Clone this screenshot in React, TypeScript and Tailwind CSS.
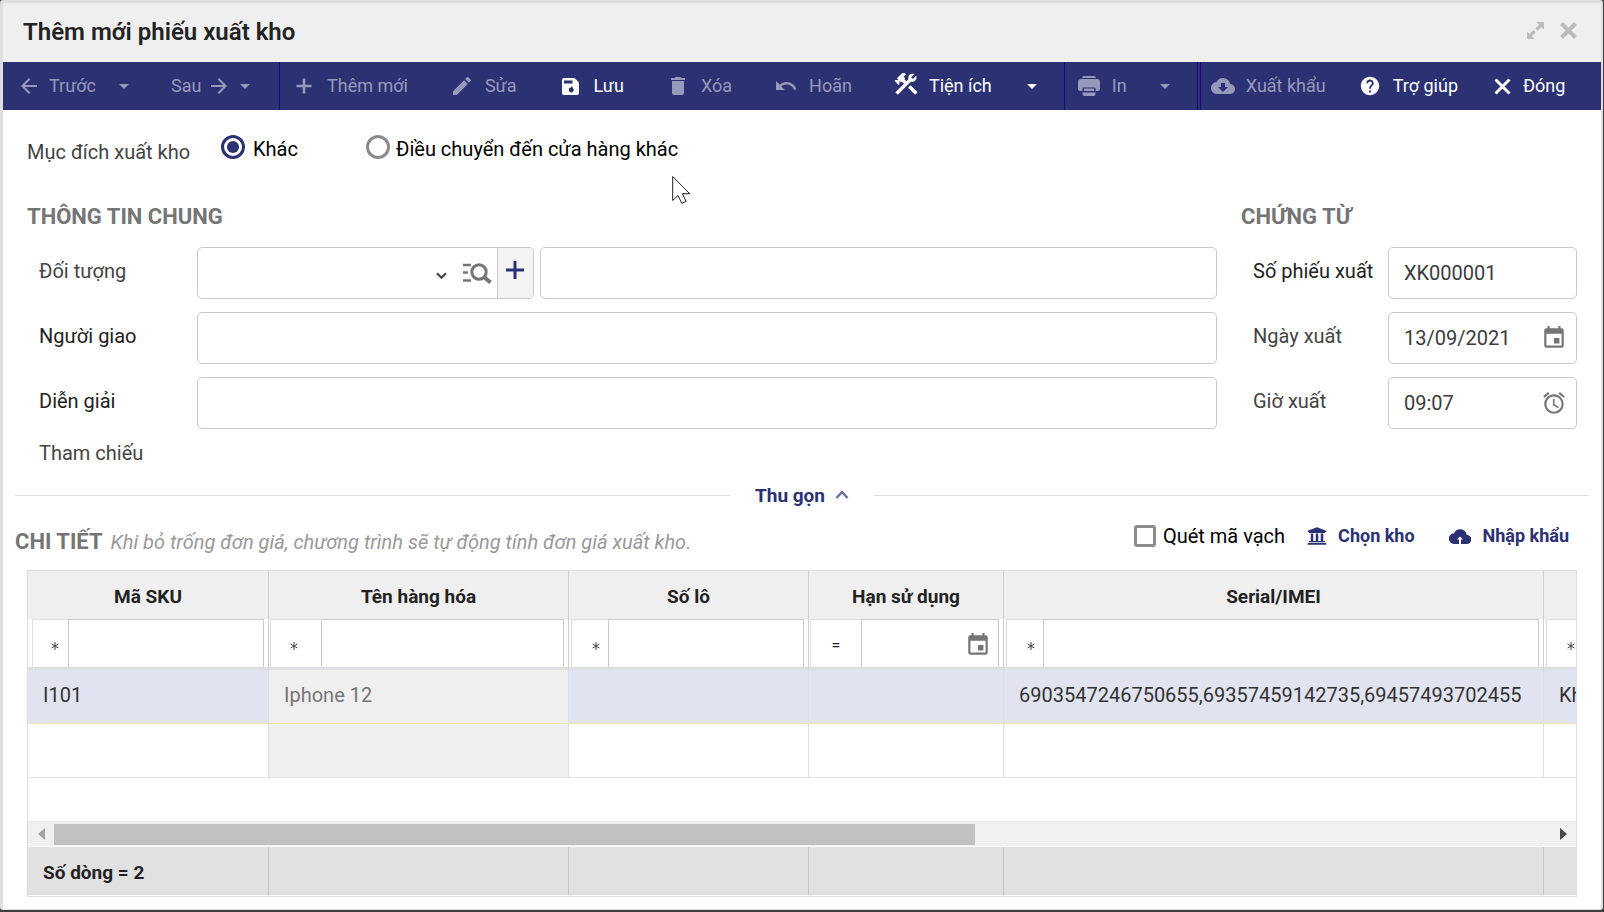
import type { ReactNode } from "react";
import {
  MdAlarm,
  MdArrowBack,
  MdArrowDropDown,
  MdArrowForward,
  MdCloudDownload,
  MdDelete,
  MdEdit,
  MdEvent,
  MdHelp,
  MdUndo,
} from "react-icons/md";
import { FaUniversity } from "react-icons/fa";

const FIELD =
  "h-[52px] w-full min-w-0 rounded-[5px] border border-[#c9c9c9] bg-white px-[15px] text-[#3c3c3c] outline-none";

const COLUMNS = [
  { title: "Mã SKU", op: "*", opClass: "w-[36px] ml-1 pl-2" },
  { title: "Tên hàng hóa", op: "*", opClass: "w-[51px] ml-px pr-1" },
  { title: "Số lô", op: "*", opClass: "w-[37px] ml-[2px] pl-3" },
  { title: "Hạn sử dụng", op: "=", opClass: "w-[51px] ml-px", date: true },
  { title: "Serial/IMEI", op: "*", opClass: "w-[37px] ml-[2px] pl-3" },
  { title: "Kho", op: "*", opClass: "w-[37px] ml-[2px] pl-3" },
];

const ROWS = [
  ["I101", "Iphone 12", "", "", "6903547246750655,69357459142735,69457493702455", "Kho tổng"],
  ["", "", "", "", "", ""],
];

export default function App() {
  return (
    <div className="flex min-h-screen flex-col bg-[#3f3f3f] pr-px pb-[2px] font-['Roboto','Liberation_Sans',sans-serif] text-[20px] leading-6 text-[#222]">
      <main className="relative flex flex-1 flex-col overflow-hidden rounded-[3px] border-t-[3px] border-r-2 border-b border-l-[3px] border-[#dedede] bg-white">
        <header className="flex h-[59px] items-center justify-between bg-[#efefef] pr-6 pl-5">
          <h1 className="pb-[2px] text-[24px] font-semibold">Thêm mới phiếu xuất kho</h1>
          <div className="flex items-center gap-4 pb-1 text-[#bcbcbc]">
            <button aria-label="Phóng to">
              <ExpandIcon />
            </button>
            <button aria-label="Đóng cửa sổ">
              <CrossIcon strokeWidth={4} />
            </button>
          </div>
        </header>

        <Toolbar />

        <div className="flex flex-1 flex-col px-3">
          {/* Purpose */}
          <div role="radiogroup" aria-labelledby="purpose" className="ml-3 flex h-[74px] items-center">
            <span id="purpose" className="w-[194px] pt-[10px] text-[#444]">
              Mục đích xuất kho
            </span>
            <Radio label="Khác" defaultChecked className="w-[145px] gap-2" />
            <Radio label="Điều chuyển đến cửa hàng khác" className="gap-[6px]" />
          </div>

          {/* Form */}
          <div className="ml-3 flex">
            <section className="min-w-0 flex-1">
              <h2 className="mt-[17px] text-[22px] leading-8 font-bold text-[#757575]">THÔNG TIN CHUNG</h2>
              <div className="mt-[14px] flex flex-col gap-[13px]">
                <FormRow label="Đối tượng" id="partner" labelClass="text-[#444]">
                  <div className="flex h-[52px] w-[337px] shrink-0 overflow-hidden rounded-[5px] border border-[#c9c9c9]">
                    <input id="partner" className="min-w-0 flex-1 px-[15px] outline-none" />
                    <button aria-label="Mở danh sách" className="flex w-8 items-center justify-center pt-[6px]">
                      <svg width="11" height="8" viewBox="0 0 11 8" fill="none" stroke="#444" strokeWidth="2.2">
                        <path d="M1 1.2l4.5 4.6L10 1.2" />
                      </svg>
                    </button>
                    <button aria-label="Tìm kiếm" className="flex w-10 items-center justify-center">
                      <ListSearchIcon />
                    </button>
                    <button
                      aria-label="Thêm đối tượng"
                      className="flex w-9 items-center justify-center border-l border-[#c9c9c9] bg-[#f3f3f3] pr-px pb-[6px]"
                    >
                      <svg width="18" height="18" viewBox="0 0 18 18" stroke="#2b3173" strokeWidth="3">
                        <path d="M9 0v18M0 9h18" />
                      </svg>
                    </button>
                  </div>
                  <input aria-label="Tên đối tượng" className={FIELD} />
                </FormRow>
                <FormRow label="Người giao" id="deliverer">
                  <input id="deliverer" className={FIELD} />
                </FormRow>
                <FormRow label="Diễn giải" id="note">
                  <input id="note" className={FIELD} />
                </FormRow>
              </div>
              <p className="mt-3 ml-3 text-[#444]">Tham chiếu</p>
            </section>

            <section className="ml-6 w-[348px] pr-3">
              <h2 className="mt-[17px] text-[22px] leading-8 font-bold text-[#757575]">CHỨNG TỪ</h2>
              <div className="mt-[14px] flex flex-col gap-[13px]">
                <VoucherRow label="Số phiếu xuất" id="code" value="XK000001" labelClass="text-[#222]" />
                <VoucherRow label="Ngày xuất" id="date" value="13/09/2021" icon={<MdEvent size={26} />} />
                <VoucherRow label="Giờ xuất" id="time" value="09:07" icon={<MdAlarm size={26} />} />
              </div>
            </section>
          </div>

          {/* Collapse bar */}
          <div className="mt-[18px] flex h-6 items-center">
            <div className="h-px flex-1 bg-[#dedede]" />
            <button className="flex w-36 items-center justify-center gap-[10px] pt-[2px] text-[19px] font-bold text-[#2b3173]">
              Thu gọn
              <svg width="14" height="9" viewBox="0 0 14 9" fill="none" stroke="#6b6f9d" strokeWidth="2.4" className="mb-1">
                <path d="M1.500 8L7 2l5.500 6" />
              </svg>
            </button>
            <div className="h-px flex-1 bg-[#dedede]" />
          </div>

          {/* Detail title and actions */}
          <div className="mt-2 flex h-[55px] items-center justify-between">
            <div className="flex items-baseline gap-2 pb-[2px]">
              <h2 className="text-[22px] font-bold text-[#757575]">CHI TIẾT</h2>
              <em className="text-[#999]">Khi bỏ trống đơn giá, chương trình sẽ tự động tính đơn giá xuất kho.</em>
            </div>
            <div className="flex items-center pr-5 pb-[13px]">
              <label className="flex items-center gap-[7px] text-black">
                <input
                  type="checkbox"
                  className="size-[22px] appearance-none rounded-[3px] border-[3px] border-[#8c8c8c]"
                />
                Quét mã vạch
              </label>
              <button className="ml-[22px] flex items-center gap-[11px] text-[18px] font-bold text-[#2b3173]">
                <FaUniversity size={20} />
                Chọn kho
              </button>
              <button className="ml-[34px] flex items-center gap-3 text-[18px] font-bold text-[#2b3173]">
                <CloudUpIcon />
                Nhập khẩu
              </button>
            </div>
          </div>

          <DetailGrid />
        </div>

        {/* Mouse pointer */}
        <svg className="absolute top-[172px] left-[669px]" width="19" height="29" viewBox="0 0 19 29">
          <path
            d="M.7 1.500v24l5.300-5 3.800 7.800 4.300-1.900-3.700-7.700h7.300z"
            fill="#fff"
            stroke="#1a1a2a"
            strokeWidth="1"
          />
        </svg>
      </main>
    </div>
  );
}

function Toolbar() {
  return (
    <nav className="flex h-12 shrink-0 overflow-hidden bg-[#2b3173] pl-[14px] text-[18px] whitespace-nowrap">
      <div className="flex w-[263px] shrink-0 items-center border-r border-[#1b0a74]">
        <Tool icon={<MdArrowBack size={24} />} label="Trước" disabled className="gap-2" />
        <Caret label="Trước" disabled className="ml-4" />
        <button disabled className="ml-[35px] flex items-center gap-[6px] text-[#9799bb]">
          Sau
          <MdArrowForward size={24} />
        </button>
        <Caret label="Sau" disabled className="ml-[2px]" />
      </div>
      <div className="flex shrink-0 items-center gap-[42px] border-r border-[#1b0a74] pr-5 pl-3">
        <Tool icon={<PlusIcon />} label="Thêm mới" disabled />
        <Tool icon={<MdEdit size={24} />} label="Sửa" disabled />
        <Tool icon={<SaveIcon />} label="Lưu" />
        <Tool icon={<MdDelete size={24} />} label="Xóa" disabled />
        <Tool icon={<MdUndo size={24} />} label="Hoãn" disabled />
        <div className="flex items-center">
          <Tool icon={<HammerWrenchIcon />} label="Tiện ích" />
          <Caret label="Tiện ích" className="ml-7" />
        </div>
      </div>
      <div className="flex w-[133px] shrink-0 items-center border-r border-[#1b0a74] pl-3">
        <Tool icon={<PrinterIcon />} label="In" disabled />
        <Caret label="In" disabled className="ml-[26px]" />
      </div>
      <div className="ml-[2px] flex items-center gap-8 border-l border-[#1b0a74] pl-[10px]">
        <Tool icon={<MdCloudDownload size={24} />} label="Xuất khẩu" disabled />
        <Tool icon={<MdHelp size={22} />} label="Trợ giúp" />
        <Tool icon={<CrossIcon strokeWidth={3} />} label="Đóng" className="gap-[9px]" />
      </div>
    </nav>
  );
}

function Tool({
  icon,
  label,
  disabled,
  className = "gap-[11px]",
}: {
  icon: ReactNode;
  label: string;
  disabled?: boolean;
  className?: string;
}) {
  return (
    <button disabled={disabled} className={`flex items-center text-white disabled:text-[#9799bb] ${className}`}>
      <span className="flex w-6 justify-center">{icon}</span>
      {label}
    </button>
  );
}

function Caret({ label, disabled, className = "" }: { label: string; disabled?: boolean; className?: string }) {
  return (
    <button
      aria-label={`${label}: tùy chọn`}
      disabled={disabled}
      className={`text-white disabled:text-[#9799bb] ${className}`}
    >
      <MdArrowDropDown size={24} />
    </button>
  );
}

function Radio({
  label,
  defaultChecked,
  className,
}: {
  label: string;
  defaultChecked?: boolean;
  className: string;
}) {
  return (
    <label className={`flex items-center text-black ${className}`}>
      <span className="relative flex size-6 items-center justify-center">
        <input
          type="radio"
          name="purpose"
          defaultChecked={defaultChecked}
          className="peer size-6 appearance-none rounded-full border-[3px] border-[#8c8c8c] checked:border-[#2b3173]"
        />
        <span className="absolute hidden size-3 rounded-full bg-[#2b3173] peer-checked:block" />
      </span>
      <span className="pt-1">{label}</span>
    </label>
  );
}

function FormRow({
  label,
  id,
  labelClass = "",
  children,
}: {
  label: string;
  id: string;
  labelClass?: string;
  children: ReactNode;
}) {
  return (
    <div className="flex gap-[6px]">
      <label htmlFor={id} className={`ml-3 w-[152px] shrink-0 pt-3 ${labelClass}`}>
        {label}
      </label>
      {children}
    </div>
  );
}

function VoucherRow({
  label,
  id,
  value,
  icon,
  labelClass = "text-[#444]",
}: {
  label: string;
  id: string;
  value: string;
  icon?: ReactNode;
  labelClass?: string;
}) {
  return (
    <div className="flex">
      <label htmlFor={id} className={`ml-3 w-[135px] shrink-0 pt-3 ${labelClass}`}>
        {label}
      </label>
      <div className="relative flex-1">
        <input id={id} defaultValue={value} className={FIELD} />
        {icon && (
          <button aria-label={`Chọn ${label}`} className="absolute top-[13px] right-[10px] text-[#757575]">
            {icon}
          </button>
        )}
      </div>
    </div>
  );
}

function GridColumns() {
  return (
    <colgroup>
      <col className="w-[241px]" />
      <col className="w-[300px]" />
      <col className="w-[240px]" />
      <col className="w-[195px]" />
      <col className="w-[540px]" />
      <col className="w-[240px]" />
    </colgroup>
  );
}

function DetailGrid() {
  return (
    <div className="mx-3 mb-3 flex flex-1 flex-col overflow-hidden border border-[#dedede]">
      <div className="flex-1 overflow-hidden">
        <table className="w-[1756px] table-fixed border-separate border-spacing-0">
          <GridColumns />
          <thead>
            <tr className="bg-[#efefef]">
              {COLUMNS.map((col) => (
                <th key={col.title} className="h-12 border-r border-[#cfcfcf] px-0 pt-1 pb-0 text-[19px] font-bold">
                  {col.title}
                </th>
              ))}
            </tr>
            <tr>
              {COLUMNS.map((col) => (
                <td key={col.title} className="border-r border-b-[3px] border-r-[#cfcfcf] border-b-[#dfdfe3] p-0">
                  <div className="flex h-12 pr-1">
                    <button
                      aria-label={`Điều kiện lọc ${col.title}`}
                      className={`flex shrink-0 items-center justify-center border-t border-l border-[#dedede] pt-1 text-[16px] ${col.opClass}`}
                    >
                      {col.op === "*" ? <StarIcon /> : col.op}
                    </button>
                    <div className="flex min-w-0 flex-1 items-center border-t border-r border-l border-[#c9c9c9]">
                      <input aria-label={`Lọc ${col.title}`} className="h-full w-full min-w-0 px-2 outline-none" />
                      {col.date && (
                        <button aria-label="Chọn ngày" className="mr-[7px] shrink-0 pt-[3px] text-[#757575]">
                          <MdEvent size={26} />
                        </button>
                      )}
                    </div>
                  </div>
                </td>
              ))}
            </tr>
          </thead>
          <tbody>
            {ROWS.map((row, i) => (
              <tr key={i} className={i === 0 ? "bg-[#e1e3f0] text-[#333]" : "bg-white"}>
                {row.map((cell, j) => (
                  <td
                    key={j}
                    className={`h-[54px] border-r border-b border-r-[#dedfe6] px-[15px] pt-0 pb-1 whitespace-nowrap ${
                      i === 0 ? "border-b-[#f3dfb4]" : "border-b-[#e3e3e3]"
                    } ${j === 1 ? "bg-[#efefef] text-[#757575]" : ""}`}
                  >
                    {cell}
                  </td>
                ))}
              </tr>
            ))}
          </tbody>
        </table>
      </div>

      {/* Horizontal scroll */}
      <div className="flex h-[25px] items-center border-t border-[#e8e8e8] bg-[#f0f0f0]">
        <button aria-label="Cuộn trái" className="flex w-[26px] shrink-0 justify-center">
          <svg width="7" height="12" viewBox="0 0 7 12" fill="#a3a3a3">
            <path d="M7 0v12L0 6z" />
          </svg>
        </button>
        <div className="flex-1">
          <div className="h-[21px] w-8/13 bg-[#c1c1c1]" />
        </div>
        <button aria-label="Cuộn phải" className="flex w-[26px] shrink-0 justify-center">
          <svg width="7" height="12" viewBox="0 0 7 12" fill="#4a4a4a">
            <path d="M0 0v12l7-6z" />
          </svg>
        </button>
      </div>

      <div className="overflow-hidden border-y border-white">
        <table className="w-[1756px] table-fixed border-separate border-spacing-0 bg-[#e1e1e1]">
          <GridColumns />
          <tfoot>
            <tr>
              {COLUMNS.map((col, i) => (
                <td
                  key={col.title}
                  className="h-12 border-r border-[#c6c6c6] px-[15px] pt-1 pb-0 text-[19px] font-bold"
                >
                  {i === 0 ? "Số dòng = 2" : ""}
                </td>
              ))}
            </tr>
          </tfoot>
        </table>
      </div>
    </div>
  );
}

function StarIcon() {
  return (
    <svg width="8" height="8" viewBox="0 0 8 8" stroke="#444" strokeWidth="1">
      <path d="M4 0v8M.6 2l6.800 4M7.400 2L.6 6" />
    </svg>
  );
}

function PlusIcon() {
  return (
    <svg width="16" height="16" viewBox="0 0 16 16" stroke="currentColor" strokeWidth="2.6">
      <path d="M8 .5v15M.5 8h15" />
    </svg>
  );
}

function ExpandIcon() {
  return (
    <svg width="17" height="17" viewBox="0 0 17 17" fill="currentColor">
      <path d="M9.500 0H17v7.500l-2.500-2.500-4 4-2.300-2.300 4-4zM7.500 17H0V9.500L2.500 12l4-4 2.300 2.300-4 4z" />
    </svg>
  );
}

function CrossIcon({ strokeWidth }: { strokeWidth: number }) {
  return (
    <svg width="17" height="17" viewBox="0 0 17 17" stroke="currentColor" strokeWidth={strokeWidth}>
      <path d="M1.500 1.500l14 14M15.500 1.500l-14 14" />
    </svg>
  );
}

function ListSearchIcon() {
  return (
    <svg width="29" height="21" viewBox="0 0 29 21" fill="none" stroke="#757575" strokeWidth="3">
      <path d="M0 2h8M0 9.500h5M0 17.500h8" strokeWidth="2.500" />
      <circle cx="16" cy="9" r="7.200" />
      <path d="M21 14l6.500 5.500" strokeWidth="4" />
    </svg>
  );
}

function SaveIcon() {
  return (
    <svg width="17" height="17" viewBox="0 0 17 17">
      <path d="M2 0h10.500L17 4.500V15a2 2 0 0 1-2 2H2a2 2 0 0 1-2-2V2a2 2 0 0 1 2-2z" fill="currentColor" />
      <path d="M2 2.500h8.500v3H2zM7 9.800h2V8.500h1.600v1.300a2.500 2.500 0 1 1-3.600 1z" fill="#2b3173" />
    </svg>
  );
}

function HammerWrenchIcon() {
  return (
    <svg width="28" height="28" viewBox="0 0 24 24" fill="currentColor" className="mb-1 shrink-0">
      <path d="M13.780 15.300l6 6 2.110-2.160-6-6-2.110 2.160M17.500 10.100c-.39 0-.81-.05-1.140-.19L4.970 21.250l-2.110-2.110 7.410-7.400L8.500 9.960l-.72.7-1.450-1.410v2.860l-.7.700-3.520-3.560.7-.7h2.810l-1.400-1.410 3.560-3.560a2.980 2.980 0 0 1 4.220 0L9.890 5.740l1.410 1.400-.71.710 1.790 1.780 1.820-1.880c-.14-.33-.2-.75-.2-1.120a3.490 3.490 0 0 1 3.500-3.520c.59 0 1.110.14 1.580.42L16.410 6.200l1.500 1.500 2.670-2.670c.28.470.42.970.42 1.600 0 1.920-1.550 3.470-3.500 3.470z" />
    </svg>
  );
}

function PrinterIcon() {
  return (
    <svg width="22" height="20" viewBox="0 0 22 20" fill="currentColor" className="shrink-0">
      <path d="M6 0h10a2 2 0 0 1 2 2H4a2 2 0 0 1 2-2zM3 3h16a3 3 0 0 1 3 3v7a2 2 0 0 1-2 2h-2.500v-3.500h-13V15H2a2 2 0 0 1-2-2V6a3 3 0 0 1 3-3z" />
      <path d="M6 12.500h10V15H6zM4.500 16.500h13V18a2 2 0 0 1-2 2h-9a2 2 0 0 1-2-2z" />
    </svg>
  );
}

function CloudUpIcon() {
  return (
    <svg width="22" height="15" viewBox="0 0 22 15" fill="currentColor">
      <path d="M17.700 5.700A6.700 6.700 0 0 0 5 4.200 5.400 5.400 0 0 0 5.400 15H10V10.500H8L11 7.500l3 3H12V15h5.500a4.600 4.600 0 0 0 .2-9.300z" />
    </svg>
  );
}
